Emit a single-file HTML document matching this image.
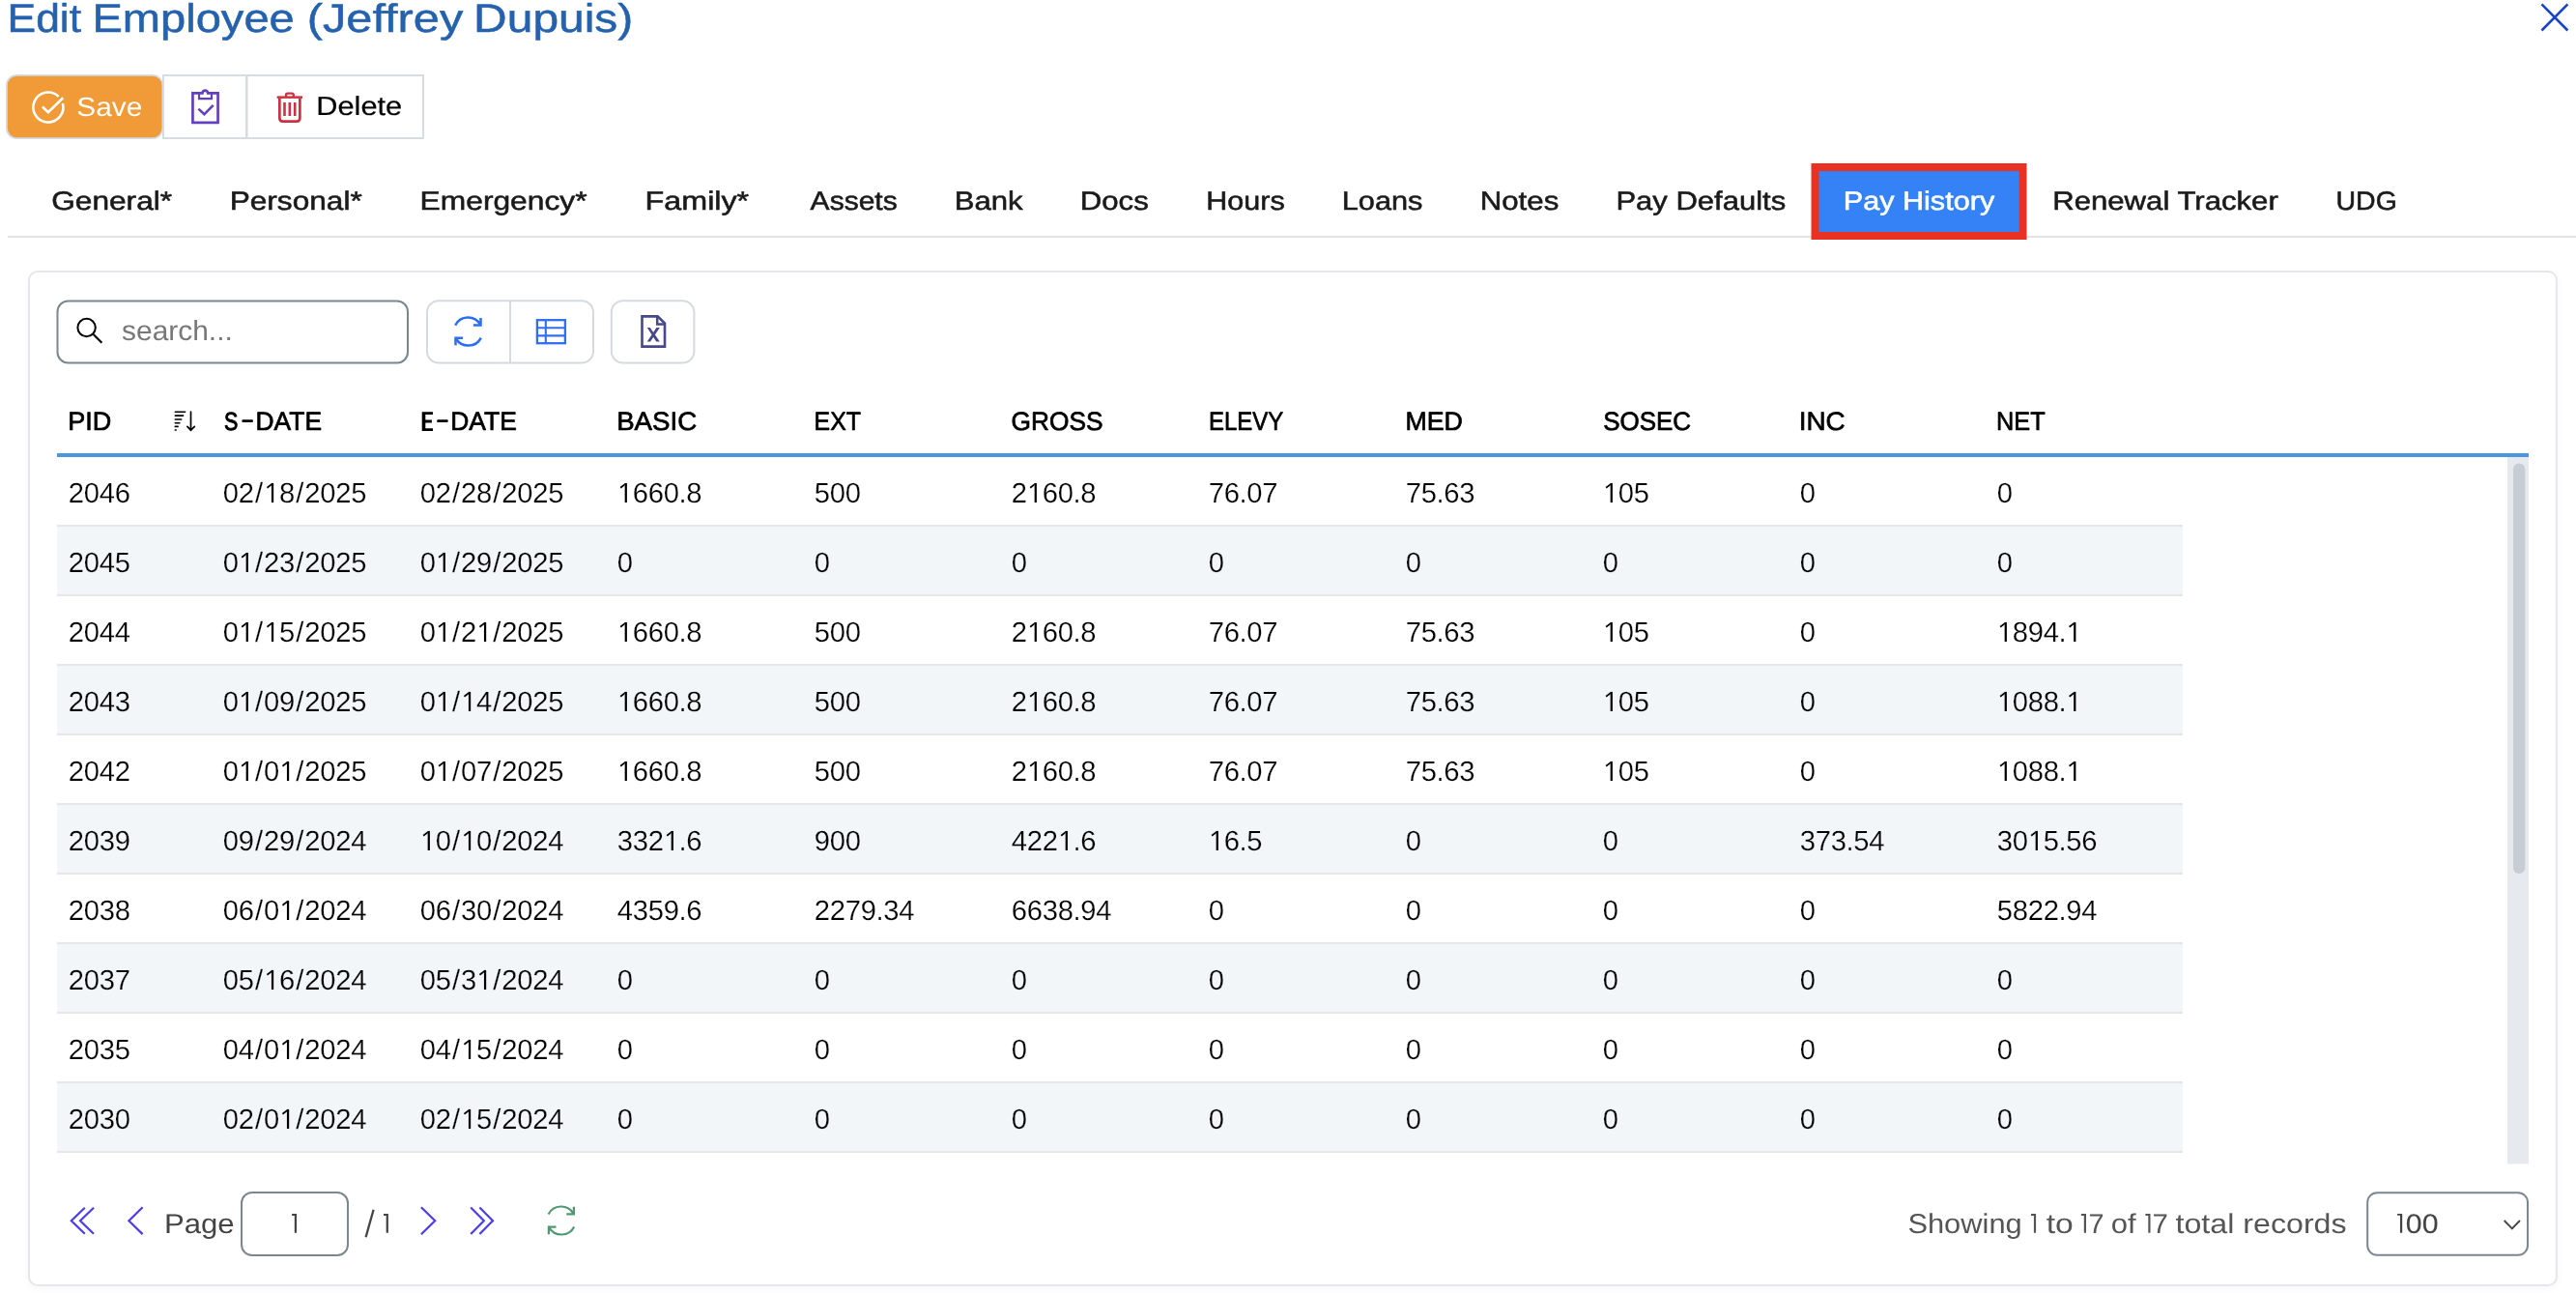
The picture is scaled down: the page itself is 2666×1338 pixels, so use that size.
<!DOCTYPE html>
<html><head><meta charset="utf-8"><title>Edit Employee</title>
<style>
html,body{margin:0;padding:0;background:#ffffff;width:2666px;height:1338px;overflow:hidden;}
.card{position:absolute;left:29px;top:280px;width:2618px;height:1051px;box-sizing:border-box;border:2px solid #e5e7ea;border-radius:10px;background:#fff;box-shadow:0 3px 10px rgba(0,0,0,0.035);}
svg{position:absolute;left:0;top:0;will-change:transform;}
text{font-family:"Liberation Sans",sans-serif;white-space:pre;text-rendering:geometricPrecision;}
</style></head><body>
<div class="card"></div>
<svg width="2666" height="1338" viewBox="0 0 2666 1338">
<text x="7.52" y="32.55" font-size="41.28" fill="#2562ae" stroke="#2562ae" stroke-width="0.5" stroke-linejoin="round" textLength="76.54" lengthAdjust="spacingAndGlyphs">Edit</text>
<text x="95.40" y="32.55" font-size="41.28" fill="#2562ae" stroke="#2562ae" stroke-width="0.5" stroke-linejoin="round" textLength="209.36" lengthAdjust="spacingAndGlyphs">Employee</text>
<text x="317.80" y="32.55" font-size="41.28" fill="#2562ae" stroke="#2562ae" stroke-width="0.5" stroke-linejoin="round" textLength="161.45" lengthAdjust="spacingAndGlyphs">(Jeffrey</text>
<text x="490.13" y="32.55" font-size="41.28" fill="#2562ae" stroke="#2562ae" stroke-width="0.5" stroke-linejoin="round" textLength="165.16" lengthAdjust="spacingAndGlyphs">Dupuis)</text>
<path d="M2630.5 4.3 L2657.4 31.5 M2657.4 4.3 L2630.5 31.5" stroke="#1844c8" stroke-width="2.6" fill="none"/>
<rect x="6.00" y="77.00" width="163.00" height="67.00" rx="11" fill="#d5dde3"/>
<rect x="7.80" y="78.80" width="159.70" height="63.50" rx="9.5" fill="#f09b37"/>
<path d="M64.87 106.99 A15.5 15.5 0 1 1 60.67 99.85" stroke="#fff" stroke-width="2.6" fill="none"/>
<path d="M43.9 110.5 L49.9 116.3 L65.2 101.2" stroke="#fff" stroke-width="2.6" fill="none"/>
<text x="79.31" y="119.60" font-size="27.62" fill="#ffffff" textLength="67.99" lengthAdjust="spacingAndGlyphs">Save</text>
<rect x="169.00" y="78.00" width="86.00" height="65.00" rx="0" fill="none" stroke="#d5dce2" stroke-width="2"/>
<rect x="255.50" y="78.00" width="182.50" height="65.00" rx="0" fill="none" stroke="#d5dce2" stroke-width="2"/>
<path d="M199.45 126.85 V96.45 H209.4 A2.9 2.9 0 0 1 215.2 96.45 H225.55 V126.85 Z" stroke="#6240c0" stroke-width="2.7" fill="none" stroke-linejoin="miter"/>
<path d="M206 96.5 V102.1 H219 V96.5" stroke="#6240c0" stroke-width="2.2" fill="none"/>
<path d="M205.4 112.6 L211.4 118.3 L220.7 108.8" stroke="#6240c0" stroke-width="2.6" fill="none"/>
<path d="M286.7 100.65 H313" stroke="#cc3340" stroke-width="2.5" fill="none"/>
<path d="M296 100 V98.4 Q296 96.7 297.7 96.7 H302.1 Q303.8 96.7 303.8 98.4 V100" stroke="#cc3340" stroke-width="2.3" fill="none"/>
<path d="M289.35 101.5 V122.2 Q289.35 125.55 292.7 125.55 H307 Q310.35 125.55 310.35 122.2 V101.5" stroke="#cc3340" stroke-width="2.7" fill="none"/>
<path d="M294.5 106 V120.1 M299.8 106 V120.1 M305.2 106 V120.1" stroke="#cc3340" stroke-width="2.6" fill="none"/>
<text x="327.37" y="119.47" font-size="27.33" fill="#000000" stroke="#000000" stroke-width="0.2" stroke-linejoin="round" textLength="88.79" lengthAdjust="spacingAndGlyphs">Delete</text>
<rect x="8.00" y="244.00" width="2658.00" height="2.00" rx="0" fill="#e3e3e3"/>
<rect x="1874.50" y="169.00" width="223.00" height="79.00" rx="0" fill="#ea3223"/>
<rect x="1882.50" y="177.00" width="207.00" height="63.00" rx="0" fill="#3482f5"/>
<text x="53.17" y="217.47" font-size="27.11" fill="#1a1a1a" stroke="#1a1a1a" stroke-width="0.55" stroke-linejoin="round" textLength="124.99" lengthAdjust="spacingAndGlyphs">General*</text>
<text x="237.65" y="217.47" font-size="27.11" fill="#1a1a1a" stroke="#1a1a1a" stroke-width="0.55" stroke-linejoin="round" textLength="137.07" lengthAdjust="spacingAndGlyphs">Personal*</text>
<text x="434.64" y="217.47" font-size="27.11" fill="#1a1a1a" stroke="#1a1a1a" stroke-width="0.55" stroke-linejoin="round" textLength="172.92" lengthAdjust="spacingAndGlyphs">Emergency*</text>
<text x="667.60" y="217.47" font-size="27.11" fill="#1a1a1a" stroke="#1a1a1a" stroke-width="0.55" stroke-linejoin="round" textLength="107.57" lengthAdjust="spacingAndGlyphs">Family*</text>
<text x="838.64" y="217.47" font-size="27.11" fill="#1a1a1a" stroke="#1a1a1a" stroke-width="0.55" stroke-linejoin="round" textLength="90.04" lengthAdjust="spacingAndGlyphs">Assets</text>
<text x="987.69" y="217.47" font-size="27.11" fill="#1a1a1a" stroke="#1a1a1a" stroke-width="0.55" stroke-linejoin="round" textLength="70.94" lengthAdjust="spacingAndGlyphs">Bank</text>
<text x="1117.69" y="217.47" font-size="27.11" fill="#1a1a1a" stroke="#1a1a1a" stroke-width="0.55" stroke-linejoin="round" textLength="71.06" lengthAdjust="spacingAndGlyphs">Docs</text>
<text x="1248.34" y="217.47" font-size="27.11" fill="#1a1a1a" stroke="#1a1a1a" stroke-width="0.55" stroke-linejoin="round" textLength="81.44" lengthAdjust="spacingAndGlyphs">Hours</text>
<text x="1388.72" y="217.47" font-size="27.11" fill="#1a1a1a" stroke="#1a1a1a" stroke-width="0.55" stroke-linejoin="round" textLength="83.73" lengthAdjust="spacingAndGlyphs">Loans</text>
<text x="1531.68" y="217.47" font-size="27.11" fill="#1a1a1a" stroke="#1a1a1a" stroke-width="0.55" stroke-linejoin="round" textLength="81.63" lengthAdjust="spacingAndGlyphs">Notes</text>
<text x="1672.45" y="217.47" font-size="27.11" fill="#1a1a1a" stroke="#1a1a1a" stroke-width="0.55" stroke-linejoin="round" textLength="175.71" lengthAdjust="spacingAndGlyphs">Pay Defaults</text>
<text x="1907.74" y="217.47" font-size="27.11" fill="#ffffff" stroke="#ffffff" stroke-width="0.55" stroke-linejoin="round" textLength="156.46" lengthAdjust="spacingAndGlyphs">Pay History</text>
<text x="2124.19" y="217.47" font-size="27.11" fill="#1a1a1a" stroke="#1a1a1a" stroke-width="0.55" stroke-linejoin="round" textLength="233.60" lengthAdjust="spacingAndGlyphs">Renewal Tracker</text>
<text x="2417.54" y="217.47" font-size="27.11" fill="#1a1a1a" stroke="#1a1a1a" stroke-width="0.55" stroke-linejoin="round" textLength="63.28" lengthAdjust="spacingAndGlyphs">UDG</text>
<rect x="59.50" y="311.50" width="362.50" height="64.00" rx="11" fill="#ffffff" stroke="#7a8791" stroke-width="2"/>
<circle cx="89.6" cy="339" r="9.2" stroke="#000" stroke-width="2" fill="none"/>
<path d="M96.6 346 L105.4 354.8" stroke="#000" stroke-width="2.1" fill="none"/>
<text x="126.13" y="352.00" font-size="29" fill="#787878" textLength="114.67" lengthAdjust="spacingAndGlyphs">search...</text>
<rect x="442.00" y="311.25" width="172.00" height="64.25" rx="12" fill="#ffffff" stroke="#d3dae0" stroke-width="2"/>
<rect x="527.00" y="311.00" width="2.00" height="64.50" rx="0" fill="#d3dae0"/>
<rect x="632.80" y="311.25" width="85.60" height="64.25" rx="12" fill="#ffffff" stroke="#d3dae0" stroke-width="2"/>
<g transform="translate(470,327.5)" stroke="#2d6ef0" stroke-width="2.5" fill="none"><path d="M1.2 9.1 A14.8 14.8 0 0 1 27.0 8.2"/><path d="M19.9 9.0 H27.5 V1.4" stroke-linejoin="miter"/><g transform="rotate(180 14.5 15.6)"><path d="M1.2 9.1 A14.8 14.8 0 0 1 27.0 8.2"/><path d="M19.9 9.0 H27.5 V1.4" stroke-linejoin="miter"/></g></g>
<rect x="555.9" y="331.2" width="29" height="24" stroke="#2f6ff0" stroke-width="2.3" fill="none"/>
<path d="M564.8 331 V355.5 M555.5 339.2 H585 M555.5 347.4 H585" stroke="#2f6ff0" stroke-width="2.1" fill="none"/>
<path d="M680.6 327.4 H664.5 V358.6 H688 V334.6 Z" stroke="#474889" stroke-width="2.6" fill="none" stroke-linejoin="miter"/>
<path d="M680.2 327.4 V335.6 H688.5" stroke="#474889" stroke-width="2.5" fill="none"/>
<path d="M669.8 339.1 H672.75 L682.85 353.6 H679.2 Z M679.4 339.1 H682.85 L673.1 353.6 H669.8 Z" fill="#474889"/>
<text x="70.20" y="445.40" font-size="26.74" fill="#000000" stroke="#000000" stroke-width="0.7" stroke-linejoin="round" textLength="45.04" lengthAdjust="spacingAndGlyphs">PID</text>
<text x="264.55" y="445.40" font-size="26.74" fill="#000000" stroke="#000000" stroke-width="0.7" stroke-linejoin="round" textLength="68.47" lengthAdjust="spacingAndGlyphs">DATE</text>
<text x="466.25" y="445.40" font-size="26.74" fill="#000000" stroke="#000000" stroke-width="0.7" stroke-linejoin="round" textLength="68.57" lengthAdjust="spacingAndGlyphs">DATE</text>
<text x="638.15" y="445.40" font-size="26.74" fill="#000000" stroke="#000000" stroke-width="0.7" stroke-linejoin="round" textLength="83.03" lengthAdjust="spacingAndGlyphs">BASIC</text>
<text x="842.62" y="445.40" font-size="26.74" fill="#000000" stroke="#000000" stroke-width="0.7" stroke-linejoin="round" textLength="48.36" lengthAdjust="spacingAndGlyphs">EXT</text>
<text x="1046.50" y="445.40" font-size="26.74" fill="#000000" stroke="#000000" stroke-width="0.7" stroke-linejoin="round" textLength="95.09" lengthAdjust="spacingAndGlyphs">GROSS</text>
<text x="1250.95" y="445.40" font-size="26.74" fill="#000000" stroke="#000000" stroke-width="0.7" stroke-linejoin="round" textLength="77.23" lengthAdjust="spacingAndGlyphs">ELEVY</text>
<text x="1454.47" y="445.40" font-size="26.74" fill="#000000" stroke="#000000" stroke-width="0.7" stroke-linejoin="round" textLength="59.47" lengthAdjust="spacingAndGlyphs">MED</text>
<text x="1659.14" y="445.40" font-size="26.74" fill="#000000" stroke="#000000" stroke-width="0.7" stroke-linejoin="round" textLength="90.98" lengthAdjust="spacingAndGlyphs">SOSEC</text>
<text x="1861.74" y="445.40" font-size="26.74" fill="#000000" stroke="#000000" stroke-width="0.7" stroke-linejoin="round" textLength="48.00" lengthAdjust="spacingAndGlyphs">INC</text>
<text x="2066.09" y="445.40" font-size="26.74" fill="#000000" stroke="#000000" stroke-width="0.7" stroke-linejoin="round" textLength="50.63" lengthAdjust="spacingAndGlyphs">NET</text>
<text x="232.10" y="445.23" font-size="26.24" fill="#000000" stroke="#000000" stroke-width="1.05" stroke-linejoin="round" textLength="14.29" lengthAdjust="spacingAndGlyphs">S</text>
<rect x="250.40" y="434.30" width="11.50" height="2.70" rx="1" fill="#000000"/>
<rect x="452.20" y="434.30" width="11.50" height="2.70" rx="1" fill="#000000"/>
<path d="M436.7 426.2 H448.0 V429.0 H440.3 V434.6 H446.9 V437.4 H440.3 V443.2 H448.0 V446.0 H436.7 Z" fill="#000"/>
<path d="M181.3 426.3 H191.6 M181.3 430.1 H189.6 M181.3 434 H187.7 M181.3 437.7 H185.9 M181.3 441.4 H184.1 M181.3 445 H182.2" stroke="#000" stroke-width="1.6" stroke-linecap="round" fill="none"/>
<path d="M197.5 426 V445 M193.9 441.3 L197.5 445.2 L201.3 441.3" stroke="#000" stroke-width="1.7" stroke-linecap="round" fill="none"/>
<rect x="59.00" y="469.00" width="2558.00" height="4.00" rx="0" fill="#4a96e3"/>
<rect x="59.00" y="543.00" width="2200.00" height="2.00" rx="0" fill="#e3e7eb"/>
<text x="70.69 86.69 102.70 118.71" y="520.0" font-size="29.2" fill="#000" stroke="#ffffff" stroke-width="0.2">2046</text>
<text x="230.69 246.69 263.89 273.07 288.97 306.16 315.23 331.24 347.25 363.26" y="520.0" font-size="29.2" fill="#000" stroke="#ffffff" stroke-width="0.2">02/ 8/2025</text>
<path d="M280.92 499.90 H283.17 V520.0H280.92 Z" fill="#000"/><path d="M281.17 500.10 L275.87 504.00 L276.97 505.50 L281.07 502.30 Z" fill="#000"/>
<text x="434.69 450.69 467.89 476.96 492.97 510.16 519.23 535.24 551.25 567.26" y="520.0" font-size="29.2" fill="#000" stroke="#ffffff" stroke-width="0.2">02/28/2025</text>
<text x="638.80 654.69 670.70 686.71 702.51 710.18" y="520.0" font-size="29.2" fill="#000" stroke="#ffffff" stroke-width="0.2"> 660.8</text>
<path d="M646.65 499.90 H648.90 V520.0H646.65 Z" fill="#000"/><path d="M646.90 500.10 L641.60 504.00 L642.70 505.50 L646.80 502.30 Z" fill="#000"/>
<text x="842.69 858.69 874.70" y="520.0" font-size="29.2" fill="#000" stroke="#ffffff" stroke-width="0.2">500</text>
<text x="1046.69 1062.81 1078.70 1094.71 1110.51 1118.18" y="520.0" font-size="29.2" fill="#000" stroke="#ffffff" stroke-width="0.2">2 60.8</text>
<path d="M1070.66 499.90 H1072.91 V520.0H1070.66 Z" fill="#000"/><path d="M1070.91 500.10 L1065.61 504.00 L1066.71 505.50 L1070.81 502.30 Z" fill="#000"/>
<text x="1250.69 1266.69 1282.49 1290.16 1306.17" y="520.0" font-size="29.2" fill="#000" stroke="#ffffff" stroke-width="0.2">76.07</text>
<text x="1454.69 1470.69 1486.49 1494.16 1510.17" y="520.0" font-size="29.2" fill="#000" stroke="#ffffff" stroke-width="0.2">75.63</text>
<text x="1658.80 1674.69 1690.70" y="520.0" font-size="29.2" fill="#000" stroke="#ffffff" stroke-width="0.2"> 05</text>
<path d="M1666.65 499.90 H1668.90 V520.0H1666.65 Z" fill="#000"/><path d="M1666.90 500.10 L1661.60 504.00 L1662.70 505.50 L1666.80 502.30 Z" fill="#000"/>
<text x="1862.69" y="520.0" font-size="29.2" fill="#000" stroke="#ffffff" stroke-width="0.2">0</text>
<text x="2066.69" y="520.0" font-size="29.2" fill="#000" stroke="#ffffff" stroke-width="0.2">0</text>
<rect x="59.00" y="545.00" width="2200.00" height="70.00" rx="0" fill="#f3f6f8"/>
<rect x="59.00" y="615.00" width="2200.00" height="2.00" rx="0" fill="#e3e7eb"/>
<text x="70.69 86.69 102.70 118.71" y="592.0" font-size="29.2" fill="#000" stroke="#f3f6f8" stroke-width="0.2">2045</text>
<text x="230.69 246.81 263.89 272.96 288.97 306.16 315.23 331.24 347.25 363.26" y="592.0" font-size="29.2" fill="#000" stroke="#f3f6f8" stroke-width="0.2">0 /23/2025</text>
<path d="M254.66 571.90 H256.91 V592.0H254.66 Z" fill="#000"/><path d="M254.91 572.10 L249.61 576.00 L250.71 577.50 L254.81 574.30 Z" fill="#000"/>
<text x="434.69 450.81 467.89 476.96 492.97 510.16 519.23 535.24 551.25 567.26" y="592.0" font-size="29.2" fill="#000" stroke="#f3f6f8" stroke-width="0.2">0 /29/2025</text>
<path d="M458.66 571.90 H460.91 V592.0H458.66 Z" fill="#000"/><path d="M458.91 572.10 L453.61 576.00 L454.71 577.50 L458.81 574.30 Z" fill="#000"/>
<text x="638.69" y="592.0" font-size="29.2" fill="#000" stroke="#f3f6f8" stroke-width="0.2">0</text>
<text x="842.69" y="592.0" font-size="29.2" fill="#000" stroke="#f3f6f8" stroke-width="0.2">0</text>
<text x="1046.69" y="592.0" font-size="29.2" fill="#000" stroke="#f3f6f8" stroke-width="0.2">0</text>
<text x="1250.69" y="592.0" font-size="29.2" fill="#000" stroke="#f3f6f8" stroke-width="0.2">0</text>
<text x="1454.69" y="592.0" font-size="29.2" fill="#000" stroke="#f3f6f8" stroke-width="0.2">0</text>
<text x="1658.69" y="592.0" font-size="29.2" fill="#000" stroke="#f3f6f8" stroke-width="0.2">0</text>
<text x="1862.69" y="592.0" font-size="29.2" fill="#000" stroke="#f3f6f8" stroke-width="0.2">0</text>
<text x="2066.69" y="592.0" font-size="29.2" fill="#000" stroke="#f3f6f8" stroke-width="0.2">0</text>
<rect x="59.00" y="687.00" width="2200.00" height="2.00" rx="0" fill="#e3e7eb"/>
<text x="70.69 86.69 102.70 118.71" y="664.0" font-size="29.2" fill="#000" stroke="#ffffff" stroke-width="0.2">2044</text>
<text x="230.69 246.81 263.89 273.07 288.97 306.16 315.23 331.24 347.25 363.26" y="664.0" font-size="29.2" fill="#000" stroke="#ffffff" stroke-width="0.2">0 / 5/2025</text>
<path d="M254.66 643.90 H256.91 V664.0H254.66 Z" fill="#000"/><path d="M254.91 644.10 L249.61 648.00 L250.71 649.50 L254.81 646.30 Z" fill="#000"/>
<path d="M280.92 643.90 H283.17 V664.0H280.92 Z" fill="#000"/><path d="M281.17 644.10 L275.87 648.00 L276.97 649.50 L281.07 646.30 Z" fill="#000"/>
<text x="434.69 450.81 467.89 476.96 493.08 510.16 519.23 535.24 551.25 567.26" y="664.0" font-size="29.2" fill="#000" stroke="#ffffff" stroke-width="0.2">0 /2 /2025</text>
<path d="M458.66 643.90 H460.91 V664.0H458.66 Z" fill="#000"/><path d="M458.91 644.10 L453.61 648.00 L454.71 649.50 L458.81 646.30 Z" fill="#000"/>
<path d="M500.93 643.90 H503.18 V664.0H500.93 Z" fill="#000"/><path d="M501.18 644.10 L495.88 648.00 L496.98 649.50 L501.08 646.30 Z" fill="#000"/>
<text x="638.80 654.69 670.70 686.71 702.51 710.18" y="664.0" font-size="29.2" fill="#000" stroke="#ffffff" stroke-width="0.2"> 660.8</text>
<path d="M646.65 643.90 H648.90 V664.0H646.65 Z" fill="#000"/><path d="M646.90 644.10 L641.60 648.00 L642.70 649.50 L646.80 646.30 Z" fill="#000"/>
<text x="842.69 858.69 874.70" y="664.0" font-size="29.2" fill="#000" stroke="#ffffff" stroke-width="0.2">500</text>
<text x="1046.69 1062.81 1078.70 1094.71 1110.51 1118.18" y="664.0" font-size="29.2" fill="#000" stroke="#ffffff" stroke-width="0.2">2 60.8</text>
<path d="M1070.66 643.90 H1072.91 V664.0H1070.66 Z" fill="#000"/><path d="M1070.91 644.10 L1065.61 648.00 L1066.71 649.50 L1070.81 646.30 Z" fill="#000"/>
<text x="1250.69 1266.69 1282.49 1290.16 1306.17" y="664.0" font-size="29.2" fill="#000" stroke="#ffffff" stroke-width="0.2">76.07</text>
<text x="1454.69 1470.69 1486.49 1494.16 1510.17" y="664.0" font-size="29.2" fill="#000" stroke="#ffffff" stroke-width="0.2">75.63</text>
<text x="1658.80 1674.69 1690.70" y="664.0" font-size="29.2" fill="#000" stroke="#ffffff" stroke-width="0.2"> 05</text>
<path d="M1666.65 643.90 H1668.90 V664.0H1666.65 Z" fill="#000"/><path d="M1666.90 644.10 L1661.60 648.00 L1662.70 649.50 L1666.80 646.30 Z" fill="#000"/>
<text x="1862.69" y="664.0" font-size="29.2" fill="#000" stroke="#ffffff" stroke-width="0.2">0</text>
<text x="2066.80 2082.69 2098.70 2114.71 2130.51 2138.29" y="664.0" font-size="29.2" fill="#000" stroke="#ffffff" stroke-width="0.2"> 894. </text>
<path d="M2074.65 643.90 H2076.90 V664.0H2074.65 Z" fill="#000"/><path d="M2074.90 644.10 L2069.60 648.00 L2070.70 649.50 L2074.80 646.30 Z" fill="#000"/>
<path d="M2146.14 643.90 H2148.39 V664.0H2146.14 Z" fill="#000"/><path d="M2146.39 644.10 L2141.09 648.00 L2142.19 649.50 L2146.29 646.30 Z" fill="#000"/>
<rect x="59.00" y="689.00" width="2200.00" height="70.00" rx="0" fill="#f3f6f8"/>
<rect x="59.00" y="759.00" width="2200.00" height="2.00" rx="0" fill="#e3e7eb"/>
<text x="70.69 86.69 102.70 118.71" y="736.0" font-size="29.2" fill="#000" stroke="#f3f6f8" stroke-width="0.2">2043</text>
<text x="230.69 246.81 263.89 272.96 288.97 306.16 315.23 331.24 347.25 363.26" y="736.0" font-size="29.2" fill="#000" stroke="#f3f6f8" stroke-width="0.2">0 /09/2025</text>
<path d="M254.66 715.90 H256.91 V736.0H254.66 Z" fill="#000"/><path d="M254.91 716.10 L249.61 720.00 L250.71 721.50 L254.81 718.30 Z" fill="#000"/>
<text x="434.69 450.81 467.89 477.07 492.97 510.16 519.23 535.24 551.25 567.26" y="736.0" font-size="29.2" fill="#000" stroke="#f3f6f8" stroke-width="0.2">0 / 4/2025</text>
<path d="M458.66 715.90 H460.91 V736.0H458.66 Z" fill="#000"/><path d="M458.91 716.10 L453.61 720.00 L454.71 721.50 L458.81 718.30 Z" fill="#000"/>
<path d="M484.92 715.90 H487.17 V736.0H484.92 Z" fill="#000"/><path d="M485.17 716.10 L479.87 720.00 L480.97 721.50 L485.07 718.30 Z" fill="#000"/>
<text x="638.80 654.69 670.70 686.71 702.51 710.18" y="736.0" font-size="29.2" fill="#000" stroke="#f3f6f8" stroke-width="0.2"> 660.8</text>
<path d="M646.65 715.90 H648.90 V736.0H646.65 Z" fill="#000"/><path d="M646.90 716.10 L641.60 720.00 L642.70 721.50 L646.80 718.30 Z" fill="#000"/>
<text x="842.69 858.69 874.70" y="736.0" font-size="29.2" fill="#000" stroke="#f3f6f8" stroke-width="0.2">500</text>
<text x="1046.69 1062.81 1078.70 1094.71 1110.51 1118.18" y="736.0" font-size="29.2" fill="#000" stroke="#f3f6f8" stroke-width="0.2">2 60.8</text>
<path d="M1070.66 715.90 H1072.91 V736.0H1070.66 Z" fill="#000"/><path d="M1070.91 716.10 L1065.61 720.00 L1066.71 721.50 L1070.81 718.30 Z" fill="#000"/>
<text x="1250.69 1266.69 1282.49 1290.16 1306.17" y="736.0" font-size="29.2" fill="#000" stroke="#f3f6f8" stroke-width="0.2">76.07</text>
<text x="1454.69 1470.69 1486.49 1494.16 1510.17" y="736.0" font-size="29.2" fill="#000" stroke="#f3f6f8" stroke-width="0.2">75.63</text>
<text x="1658.80 1674.69 1690.70" y="736.0" font-size="29.2" fill="#000" stroke="#f3f6f8" stroke-width="0.2"> 05</text>
<path d="M1666.65 715.90 H1668.90 V736.0H1666.65 Z" fill="#000"/><path d="M1666.90 716.10 L1661.60 720.00 L1662.70 721.50 L1666.80 718.30 Z" fill="#000"/>
<text x="1862.69" y="736.0" font-size="29.2" fill="#000" stroke="#f3f6f8" stroke-width="0.2">0</text>
<text x="2066.80 2082.69 2098.70 2114.71 2130.51 2138.29" y="736.0" font-size="29.2" fill="#000" stroke="#f3f6f8" stroke-width="0.2"> 088. </text>
<path d="M2074.65 715.90 H2076.90 V736.0H2074.65 Z" fill="#000"/><path d="M2074.90 716.10 L2069.60 720.00 L2070.70 721.50 L2074.80 718.30 Z" fill="#000"/>
<path d="M2146.14 715.90 H2148.39 V736.0H2146.14 Z" fill="#000"/><path d="M2146.39 716.10 L2141.09 720.00 L2142.19 721.50 L2146.29 718.30 Z" fill="#000"/>
<rect x="59.00" y="831.00" width="2200.00" height="2.00" rx="0" fill="#e3e7eb"/>
<text x="70.69 86.69 102.70 118.71" y="808.0" font-size="29.2" fill="#000" stroke="#ffffff" stroke-width="0.2">2042</text>
<text x="230.69 246.81 263.89 272.96 289.08 306.16 315.23 331.24 347.25 363.26" y="808.0" font-size="29.2" fill="#000" stroke="#ffffff" stroke-width="0.2">0 /0 /2025</text>
<path d="M254.66 787.90 H256.91 V808.0H254.66 Z" fill="#000"/><path d="M254.91 788.10 L249.61 792.00 L250.71 793.50 L254.81 790.30 Z" fill="#000"/>
<path d="M296.93 787.90 H299.18 V808.0H296.93 Z" fill="#000"/><path d="M297.18 788.10 L291.88 792.00 L292.98 793.50 L297.08 790.30 Z" fill="#000"/>
<text x="434.69 450.81 467.89 476.96 492.97 510.16 519.23 535.24 551.25 567.26" y="808.0" font-size="29.2" fill="#000" stroke="#ffffff" stroke-width="0.2">0 /07/2025</text>
<path d="M458.66 787.90 H460.91 V808.0H458.66 Z" fill="#000"/><path d="M458.91 788.10 L453.61 792.00 L454.71 793.50 L458.81 790.30 Z" fill="#000"/>
<text x="638.80 654.69 670.70 686.71 702.51 710.18" y="808.0" font-size="29.2" fill="#000" stroke="#ffffff" stroke-width="0.2"> 660.8</text>
<path d="M646.65 787.90 H648.90 V808.0H646.65 Z" fill="#000"/><path d="M646.90 788.10 L641.60 792.00 L642.70 793.50 L646.80 790.30 Z" fill="#000"/>
<text x="842.69 858.69 874.70" y="808.0" font-size="29.2" fill="#000" stroke="#ffffff" stroke-width="0.2">500</text>
<text x="1046.69 1062.81 1078.70 1094.71 1110.51 1118.18" y="808.0" font-size="29.2" fill="#000" stroke="#ffffff" stroke-width="0.2">2 60.8</text>
<path d="M1070.66 787.90 H1072.91 V808.0H1070.66 Z" fill="#000"/><path d="M1070.91 788.10 L1065.61 792.00 L1066.71 793.50 L1070.81 790.30 Z" fill="#000"/>
<text x="1250.69 1266.69 1282.49 1290.16 1306.17" y="808.0" font-size="29.2" fill="#000" stroke="#ffffff" stroke-width="0.2">76.07</text>
<text x="1454.69 1470.69 1486.49 1494.16 1510.17" y="808.0" font-size="29.2" fill="#000" stroke="#ffffff" stroke-width="0.2">75.63</text>
<text x="1658.80 1674.69 1690.70" y="808.0" font-size="29.2" fill="#000" stroke="#ffffff" stroke-width="0.2"> 05</text>
<path d="M1666.65 787.90 H1668.90 V808.0H1666.65 Z" fill="#000"/><path d="M1666.90 788.10 L1661.60 792.00 L1662.70 793.50 L1666.80 790.30 Z" fill="#000"/>
<text x="1862.69" y="808.0" font-size="29.2" fill="#000" stroke="#ffffff" stroke-width="0.2">0</text>
<text x="2066.80 2082.69 2098.70 2114.71 2130.51 2138.29" y="808.0" font-size="29.2" fill="#000" stroke="#ffffff" stroke-width="0.2"> 088. </text>
<path d="M2074.65 787.90 H2076.90 V808.0H2074.65 Z" fill="#000"/><path d="M2074.90 788.10 L2069.60 792.00 L2070.70 793.50 L2074.80 790.30 Z" fill="#000"/>
<path d="M2146.14 787.90 H2148.39 V808.0H2146.14 Z" fill="#000"/><path d="M2146.39 788.10 L2141.09 792.00 L2142.19 793.50 L2146.29 790.30 Z" fill="#000"/>
<rect x="59.00" y="833.00" width="2200.00" height="70.00" rx="0" fill="#f3f6f8"/>
<rect x="59.00" y="903.00" width="2200.00" height="2.00" rx="0" fill="#e3e7eb"/>
<text x="70.69 86.69 102.70 118.71" y="880.0" font-size="29.2" fill="#000" stroke="#f3f6f8" stroke-width="0.2">2039</text>
<text x="230.69 246.69 263.89 272.96 288.97 306.16 315.23 331.24 347.25 363.26" y="880.0" font-size="29.2" fill="#000" stroke="#f3f6f8" stroke-width="0.2">09/29/2024</text>
<text x="434.80 450.69 467.89 477.07 492.97 510.16 519.23 535.24 551.25 567.26" y="880.0" font-size="29.2" fill="#000" stroke="#f3f6f8" stroke-width="0.2"> 0/ 0/2024</text>
<path d="M442.65 859.90 H444.90 V880.0H442.65 Z" fill="#000"/><path d="M442.90 860.10 L437.60 864.00 L438.70 865.50 L442.80 862.30 Z" fill="#000"/>
<path d="M484.92 859.90 H487.17 V880.0H484.92 Z" fill="#000"/><path d="M485.17 860.10 L479.87 864.00 L480.97 865.50 L485.07 862.30 Z" fill="#000"/>
<text x="638.69 654.69 670.70 686.83 702.51 710.18" y="880.0" font-size="29.2" fill="#000" stroke="#f3f6f8" stroke-width="0.2">332 .6</text>
<path d="M694.68 859.90 H696.93 V880.0H694.68 Z" fill="#000"/><path d="M694.93 860.10 L689.63 864.00 L690.73 865.50 L694.83 862.30 Z" fill="#000"/>
<text x="842.69 858.69 874.70" y="880.0" font-size="29.2" fill="#000" stroke="#f3f6f8" stroke-width="0.2">900</text>
<text x="1046.69 1062.69 1078.70 1094.83 1110.51 1118.18" y="880.0" font-size="29.2" fill="#000" stroke="#f3f6f8" stroke-width="0.2">422 .6</text>
<path d="M1102.68 859.90 H1104.93 V880.0H1102.68 Z" fill="#000"/><path d="M1102.93 860.10 L1097.63 864.00 L1098.73 865.50 L1102.83 862.30 Z" fill="#000"/>
<text x="1250.80 1266.69 1282.49 1290.16" y="880.0" font-size="29.2" fill="#000" stroke="#f3f6f8" stroke-width="0.2"> 6.5</text>
<path d="M1258.65 859.90 H1260.90 V880.0H1258.65 Z" fill="#000"/><path d="M1258.90 860.10 L1253.60 864.00 L1254.70 865.50 L1258.80 862.30 Z" fill="#000"/>
<text x="1454.69" y="880.0" font-size="29.2" fill="#000" stroke="#f3f6f8" stroke-width="0.2">0</text>
<text x="1658.69" y="880.0" font-size="29.2" fill="#000" stroke="#f3f6f8" stroke-width="0.2">0</text>
<text x="1862.69 1878.69 1894.70 1910.50 1918.17 1934.18" y="880.0" font-size="29.2" fill="#000" stroke="#f3f6f8" stroke-width="0.2">373.54</text>
<text x="2066.69 2082.69 2098.82 2114.71 2130.51 2138.18 2154.19" y="880.0" font-size="29.2" fill="#000" stroke="#f3f6f8" stroke-width="0.2">30 5.56</text>
<path d="M2106.67 859.90 H2108.92 V880.0H2106.67 Z" fill="#000"/><path d="M2106.92 860.10 L2101.62 864.00 L2102.72 865.50 L2106.82 862.30 Z" fill="#000"/>
<rect x="59.00" y="975.00" width="2200.00" height="2.00" rx="0" fill="#e3e7eb"/>
<text x="70.69 86.69 102.70 118.71" y="952.0" font-size="29.2" fill="#000" stroke="#ffffff" stroke-width="0.2">2038</text>
<text x="230.69 246.69 263.89 272.96 289.08 306.16 315.23 331.24 347.25 363.26" y="952.0" font-size="29.2" fill="#000" stroke="#ffffff" stroke-width="0.2">06/0 /2024</text>
<path d="M296.93 931.90 H299.18 V952.0H296.93 Z" fill="#000"/><path d="M297.18 932.10 L291.88 936.00 L292.98 937.50 L297.08 934.30 Z" fill="#000"/>
<text x="434.69 450.69 467.89 476.96 492.97 510.16 519.23 535.24 551.25 567.26" y="952.0" font-size="29.2" fill="#000" stroke="#ffffff" stroke-width="0.2">06/30/2024</text>
<text x="638.69 654.69 670.70 686.71 702.51 710.18" y="952.0" font-size="29.2" fill="#000" stroke="#ffffff" stroke-width="0.2">4359.6</text>
<text x="842.69 858.69 874.70 890.71 906.51 914.18 930.19" y="952.0" font-size="29.2" fill="#000" stroke="#ffffff" stroke-width="0.2">2279.34</text>
<text x="1046.69 1062.69 1078.70 1094.71 1110.51 1118.18 1134.19" y="952.0" font-size="29.2" fill="#000" stroke="#ffffff" stroke-width="0.2">6638.94</text>
<text x="1250.69" y="952.0" font-size="29.2" fill="#000" stroke="#ffffff" stroke-width="0.2">0</text>
<text x="1454.69" y="952.0" font-size="29.2" fill="#000" stroke="#ffffff" stroke-width="0.2">0</text>
<text x="1658.69" y="952.0" font-size="29.2" fill="#000" stroke="#ffffff" stroke-width="0.2">0</text>
<text x="1862.69" y="952.0" font-size="29.2" fill="#000" stroke="#ffffff" stroke-width="0.2">0</text>
<text x="2066.69 2082.69 2098.70 2114.71 2130.51 2138.18 2154.19" y="952.0" font-size="29.2" fill="#000" stroke="#ffffff" stroke-width="0.2">5822.94</text>
<rect x="59.00" y="977.00" width="2200.00" height="70.00" rx="0" fill="#f3f6f8"/>
<rect x="59.00" y="1047.00" width="2200.00" height="2.00" rx="0" fill="#e3e7eb"/>
<text x="70.69 86.69 102.70 118.71" y="1024.0" font-size="29.2" fill="#000" stroke="#f3f6f8" stroke-width="0.2">2037</text>
<text x="230.69 246.69 263.89 273.07 288.97 306.16 315.23 331.24 347.25 363.26" y="1024.0" font-size="29.2" fill="#000" stroke="#f3f6f8" stroke-width="0.2">05/ 6/2024</text>
<path d="M280.92 1003.90 H283.17 V1024.0H280.92 Z" fill="#000"/><path d="M281.17 1004.10 L275.87 1008.00 L276.97 1009.50 L281.07 1006.30 Z" fill="#000"/>
<text x="434.69 450.69 467.89 476.96 493.08 510.16 519.23 535.24 551.25 567.26" y="1024.0" font-size="29.2" fill="#000" stroke="#f3f6f8" stroke-width="0.2">05/3 /2024</text>
<path d="M500.93 1003.90 H503.18 V1024.0H500.93 Z" fill="#000"/><path d="M501.18 1004.10 L495.88 1008.00 L496.98 1009.50 L501.08 1006.30 Z" fill="#000"/>
<text x="638.69" y="1024.0" font-size="29.2" fill="#000" stroke="#f3f6f8" stroke-width="0.2">0</text>
<text x="842.69" y="1024.0" font-size="29.2" fill="#000" stroke="#f3f6f8" stroke-width="0.2">0</text>
<text x="1046.69" y="1024.0" font-size="29.2" fill="#000" stroke="#f3f6f8" stroke-width="0.2">0</text>
<text x="1250.69" y="1024.0" font-size="29.2" fill="#000" stroke="#f3f6f8" stroke-width="0.2">0</text>
<text x="1454.69" y="1024.0" font-size="29.2" fill="#000" stroke="#f3f6f8" stroke-width="0.2">0</text>
<text x="1658.69" y="1024.0" font-size="29.2" fill="#000" stroke="#f3f6f8" stroke-width="0.2">0</text>
<text x="1862.69" y="1024.0" font-size="29.2" fill="#000" stroke="#f3f6f8" stroke-width="0.2">0</text>
<text x="2066.69" y="1024.0" font-size="29.2" fill="#000" stroke="#f3f6f8" stroke-width="0.2">0</text>
<rect x="59.00" y="1119.00" width="2200.00" height="2.00" rx="0" fill="#e3e7eb"/>
<text x="70.69 86.69 102.70 118.71" y="1096.0" font-size="29.2" fill="#000" stroke="#ffffff" stroke-width="0.2">2035</text>
<text x="230.69 246.69 263.89 272.96 289.08 306.16 315.23 331.24 347.25 363.26" y="1096.0" font-size="29.2" fill="#000" stroke="#ffffff" stroke-width="0.2">04/0 /2024</text>
<path d="M296.93 1075.90 H299.18 V1096.0H296.93 Z" fill="#000"/><path d="M297.18 1076.10 L291.88 1080.00 L292.98 1081.50 L297.08 1078.30 Z" fill="#000"/>
<text x="434.69 450.69 467.89 477.07 492.97 510.16 519.23 535.24 551.25 567.26" y="1096.0" font-size="29.2" fill="#000" stroke="#ffffff" stroke-width="0.2">04/ 5/2024</text>
<path d="M484.92 1075.90 H487.17 V1096.0H484.92 Z" fill="#000"/><path d="M485.17 1076.10 L479.87 1080.00 L480.97 1081.50 L485.07 1078.30 Z" fill="#000"/>
<text x="638.69" y="1096.0" font-size="29.2" fill="#000" stroke="#ffffff" stroke-width="0.2">0</text>
<text x="842.69" y="1096.0" font-size="29.2" fill="#000" stroke="#ffffff" stroke-width="0.2">0</text>
<text x="1046.69" y="1096.0" font-size="29.2" fill="#000" stroke="#ffffff" stroke-width="0.2">0</text>
<text x="1250.69" y="1096.0" font-size="29.2" fill="#000" stroke="#ffffff" stroke-width="0.2">0</text>
<text x="1454.69" y="1096.0" font-size="29.2" fill="#000" stroke="#ffffff" stroke-width="0.2">0</text>
<text x="1658.69" y="1096.0" font-size="29.2" fill="#000" stroke="#ffffff" stroke-width="0.2">0</text>
<text x="1862.69" y="1096.0" font-size="29.2" fill="#000" stroke="#ffffff" stroke-width="0.2">0</text>
<text x="2066.69" y="1096.0" font-size="29.2" fill="#000" stroke="#ffffff" stroke-width="0.2">0</text>
<rect x="59.00" y="1121.00" width="2200.00" height="70.00" rx="0" fill="#f3f6f8"/>
<rect x="59.00" y="1191.00" width="2200.00" height="2.00" rx="0" fill="#e3e7eb"/>
<text x="70.69 86.69 102.70 118.71" y="1168.0" font-size="29.2" fill="#000" stroke="#f3f6f8" stroke-width="0.2">2030</text>
<text x="230.69 246.69 263.89 272.96 289.08 306.16 315.23 331.24 347.25 363.26" y="1168.0" font-size="29.2" fill="#000" stroke="#f3f6f8" stroke-width="0.2">02/0 /2024</text>
<path d="M296.93 1147.90 H299.18 V1168.0H296.93 Z" fill="#000"/><path d="M297.18 1148.10 L291.88 1152.00 L292.98 1153.50 L297.08 1150.30 Z" fill="#000"/>
<text x="434.69 450.69 467.89 477.07 492.97 510.16 519.23 535.24 551.25 567.26" y="1168.0" font-size="29.2" fill="#000" stroke="#f3f6f8" stroke-width="0.2">02/ 5/2024</text>
<path d="M484.92 1147.90 H487.17 V1168.0H484.92 Z" fill="#000"/><path d="M485.17 1148.10 L479.87 1152.00 L480.97 1153.50 L485.07 1150.30 Z" fill="#000"/>
<text x="638.69" y="1168.0" font-size="29.2" fill="#000" stroke="#f3f6f8" stroke-width="0.2">0</text>
<text x="842.69" y="1168.0" font-size="29.2" fill="#000" stroke="#f3f6f8" stroke-width="0.2">0</text>
<text x="1046.69" y="1168.0" font-size="29.2" fill="#000" stroke="#f3f6f8" stroke-width="0.2">0</text>
<text x="1250.69" y="1168.0" font-size="29.2" fill="#000" stroke="#f3f6f8" stroke-width="0.2">0</text>
<text x="1454.69" y="1168.0" font-size="29.2" fill="#000" stroke="#f3f6f8" stroke-width="0.2">0</text>
<text x="1658.69" y="1168.0" font-size="29.2" fill="#000" stroke="#f3f6f8" stroke-width="0.2">0</text>
<text x="1862.69" y="1168.0" font-size="29.2" fill="#000" stroke="#f3f6f8" stroke-width="0.2">0</text>
<text x="2066.69" y="1168.0" font-size="29.2" fill="#000" stroke="#f3f6f8" stroke-width="0.2">0</text>
<rect x="2595.00" y="473.00" width="22.00" height="731.50" rx="0" fill="#e6e9ed"/>
<rect x="2601.00" y="479.50" width="12.30" height="424.50" rx="6" fill="#c8cdd5"/>
<path d="M87.8 1249.7 L73.8 1263.3 L87.8 1276.8 M97.0 1249.7 L83.0 1263.3 L97.0 1276.8" stroke="#4b3ee8" stroke-width="2.2" fill="none"/>
<path d="M147.6 1249.3 L133.4 1263.3 L147.6 1277.1" stroke="#4b3ee8" stroke-width="2.2" fill="none"/>
<path d="M435.9 1249.2 L450.2 1263.3 L435.9 1277.3" stroke="#4b3ee8" stroke-width="2.2" fill="none"/>
<path d="M487.2 1249.4 L500.8 1263.3 L487.2 1277 M496.4 1249.4 L510 1263.3 L496.4 1277" stroke="#4b3ee8" stroke-width="2.2" fill="none"/>
<text x="169.91" y="1276.00" font-size="28.49" fill="#444444" textLength="72.61" lengthAdjust="spacingAndGlyphs">Page</text>
<rect x="250.00" y="1234.00" width="110.00" height="65.00" rx="11" fill="#ffffff" stroke="#7a8791" stroke-width="2"/>
<path d="M304.8 1256 H307.05 V1275.7 H304.8 Z M302.1 1256 H307.05 V1257.9 H302.1 Z" fill="#444444"/>
<path d="M378.6 1280.2 L386.6 1251.8" stroke="#444444" stroke-width="2.3"/>
<path d="M399.65 1256 H401.9 V1275.7 H399.65 Z M397 1256 H401.9 V1257.9 H397 Z" fill="#444444"/>
<g transform="translate(566.4,1247.4)" stroke="#4e9770" stroke-width="2.2" fill="none"><path d="M1.2 9.1 A14.8 14.8 0 0 1 27.0 8.2"/><path d="M19.9 9.0 H27.5 V1.4" stroke-linejoin="miter"/><g transform="rotate(180 14.5 15.6)"><path d="M1.2 9.1 A14.8 14.8 0 0 1 27.0 8.2"/><path d="M19.9 9.0 H27.5 V1.4" stroke-linejoin="miter"/></g></g>
<text x="1974.40" y="1275.70" font-size="28.49" fill="#555555" textLength="118.34" lengthAdjust="spacingAndGlyphs">Showing</text>
<text x="2117.66" y="1275.70" font-size="28.49" fill="#555555" textLength="28.14" lengthAdjust="spacingAndGlyphs">to</text>
<text x="2161.43" y="1275.70" font-size="28.49" fill="#555555" textLength="16.06" lengthAdjust="spacingAndGlyphs">7</text>
<text x="2184.87" y="1275.70" font-size="28.49" fill="#555555" textLength="25.90" lengthAdjust="spacingAndGlyphs">of</text>
<text x="2227.55" y="1275.70" font-size="28.49" fill="#555555" textLength="16.37" lengthAdjust="spacingAndGlyphs">7</text>
<text x="2251.48" y="1275.70" font-size="28.49" fill="#555555" textLength="177.13" lengthAdjust="spacingAndGlyphs">total records</text>
<path d="M2104.90 1256 H2107.10 V1275.75 H2104.90 Z M2102.00 1256 H2107.10 V1257.9 H2102.00 Z" fill="#555555"/>
<path d="M2156.80 1256 H2159.00 V1275.75 H2156.80 Z M2153.90 1256 H2159.00 V1257.9 H2153.90 Z" fill="#555555"/>
<path d="M2223.30 1256 H2225.50 V1275.75 H2223.30 Z M2220.40 1256 H2225.50 V1257.9 H2220.40 Z" fill="#555555"/>
<rect x="2450.20" y="1234.20" width="165.80" height="64.60" rx="10" fill="#ffffff" stroke="#7a8791" stroke-width="2"/>
<text x="2489.85" y="1275.80" font-size="28.34" fill="#444444" stroke="#444444" stroke-width="0.1" stroke-linejoin="round" textLength="33.73" lengthAdjust="spacingAndGlyphs">00</text>
<path d="M2483.95 1255.95 H2486.2 V1275.85 H2483.95 Z M2481.07 1255.95 H2486.2 V1257.85 H2481.07 Z" fill="#444444"/>
<path d="M2591.7 1263 L2599.9 1271.3 L2608 1263" stroke="#444" stroke-width="1.9" fill="none"/>
</svg>
</body></html>
